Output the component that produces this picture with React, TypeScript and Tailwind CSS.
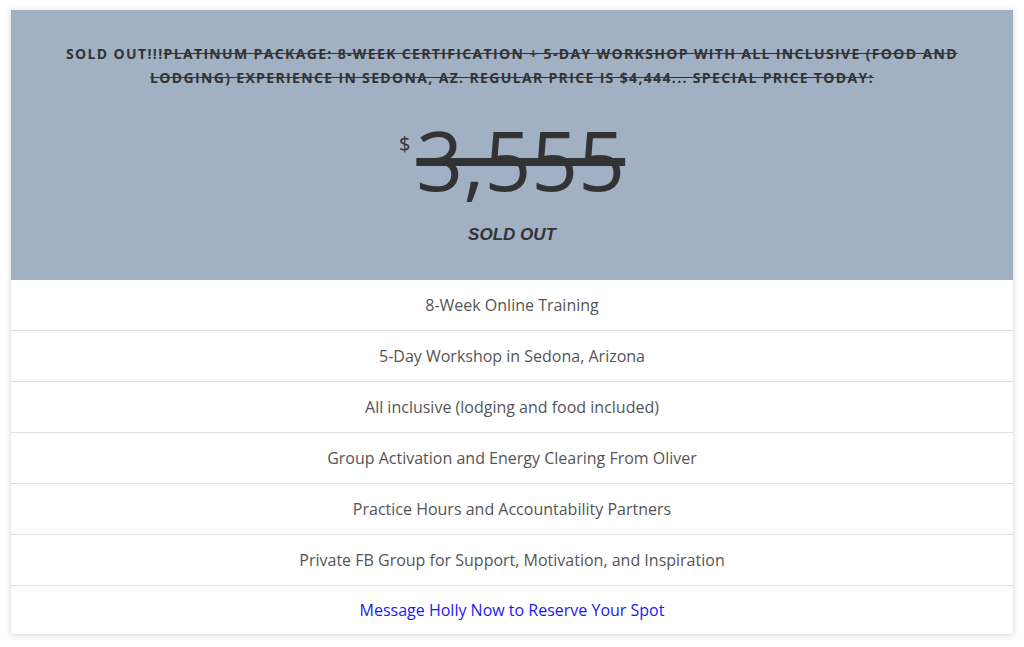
import React from "react";

const rows = [
  "8-Week Online Training",
  "5-Day Workshop in Sedona, Arizona",
  "All inclusive (lodging and food included)",
  "Group Activation and Energy Clearing From Oliver",
  "Practice Hours and Accountability Partners",
  "Private FB Group for Support, Motivation, and Inspiration",
];

export default function App() {
  return (
    <div className="min-h-[647px] bg-white pt-[10px] px-[11px]" style={{ fontFamily: '"Open Sans", sans-serif' }}>
      <div className="w-[1002px] bg-white shadow-[0_1px_6px_rgba(0,0,0,0.18)]">
        <div className="bg-[#a2b0c4] h-[270px] flex flex-col items-center pt-[32px]">
          <p className="text-center text-[#333] font-bold uppercase text-[14px] leading-[24px] tracking-[1.35px] px-[40px]">
            SOLD OUT!!!<span className="line-through">Platinum Package: 8-Week Certification + 5-Day Workshop with All inclusive (food and lodging) experience in Sedona, AZ. Regular Price is $4,444... Special Price Today:</span>
          </p>
          <div className="flex items-start mt-[26px]">
            <span className="text-[20px] leading-none text-[#333] mt-[18px] mr-[6px]">$</span>
            <span className="text-[82px] font-medium leading-[86px] text-[#333] line-through decoration-[8px]">3,555</span>
          </div>
          <p className="mt-[20px] text-[17px] font-bold italic text-[#333]" style={{ fontFamily: '"Liberation Sans", sans-serif' }}>SOLD OUT</p>
        </div>
        {rows.map((r) => (
          <div key={r} className="h-[51px] border-b border-[#dedede] flex items-center justify-center text-[16px] text-[#555]">
            {r}
          </div>
        ))}
        <div className="h-[48px] flex items-center justify-center text-[16px] text-[#1a1af0]">
          Message Holly Now to Reserve Your Spot
        </div>
      </div>
    </div>
  );
}
